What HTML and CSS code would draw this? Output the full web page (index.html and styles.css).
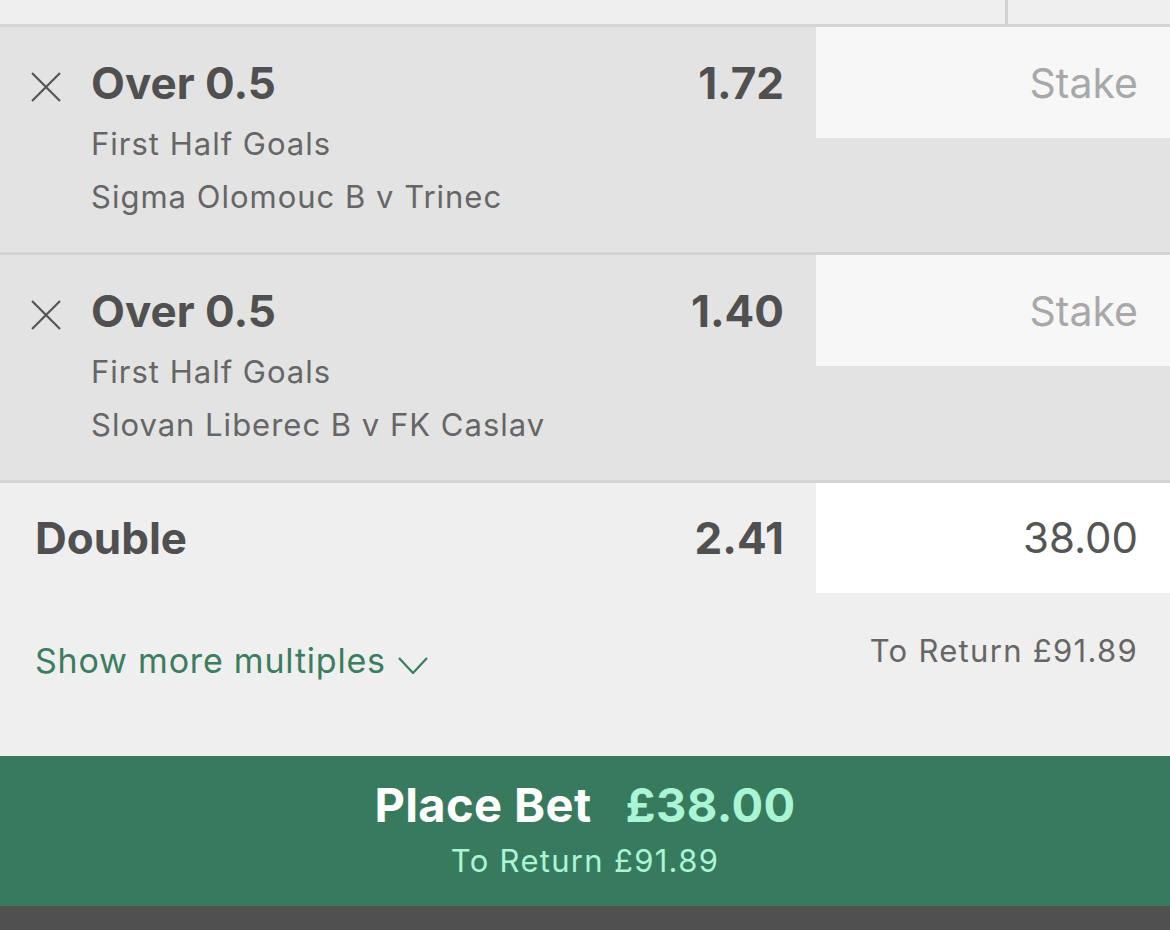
FILE: index.html
```html
<!DOCTYPE html>
<html lang="en">
<head>
	<meta charset="UTF-8">
	<title>Bet Slip</title>
	<link rel="stylesheet" href="styles.css">
</head>
<body>

	<div class="topbar">
		<div class="topbar-main"></div>
		<div class="topbar-side"></div>
	</div>

	<div class="slip">
		<div class="leg">
			<div class="leg-remove">
				<svg width="30" height="30" viewBox="0 0 30 30"><path d="M1 1 L29 29 M29 1 L1 29" stroke="#555" stroke-width="2.2" fill="none"/></svg>
			</div>
			<div class="leg-info">
				<div class="leg-head">
					<span class="leg-title">Over 0.5</span>
					<span class="leg-odds">1.72</span>
				</div>
				<div class="leg-market">First Half Goals</div>
				<div class="leg-event">Sigma Olomouc B v Trinec</div>
			</div>
			<div class="stake">Stake</div>
		</div>

		<div class="leg">
			<div class="leg-remove">
				<svg width="30" height="30" viewBox="0 0 30 30"><path d="M1 1 L29 29 M29 1 L1 29" stroke="#555" stroke-width="2.2" fill="none"/></svg>
			</div>
			<div class="leg-info">
				<div class="leg-head">
					<span class="leg-title">Over 0.5</span>
					<span class="leg-odds">1.40</span>
				</div>
				<div class="leg-market">First Half Goals</div>
				<div class="leg-event">Slovan Liberec B v FK Caslav</div>
			</div>
			<div class="stake">Stake</div>
		</div>

		<div class="multi">
			<div class="multi-row">
				<div class="multi-name">Double</div>
				<div class="multi-odds">2.41</div>
				<div class="stake stake-filled">38.00</div>
			</div>
			<div class="multi-foot">
				<div class="show-more">Show more multiples
					<svg width="30" height="17" viewBox="0 0 30 17"><path d="M1 1 L15 16 L29 1" stroke="#3b7d5e" stroke-width="2.2" fill="none"/></svg>
				</div>
				<div class="multi-return">To Return £91.89</div>
			</div>
		</div>
	</div>

	<div class="place-bet">
		<div class="place-main"><span class="place-label">Place Bet</span><span class="place-amount">£38.00</span></div>
		<div class="place-return">To Return £91.89</div>
	</div>

	<div class="bottombar"></div>

</body>
</html>
```

FILE: styles.css
```css
html,body{ margin: 0;padding: 0; }
body{ width: 1170px;height: 930px;overflow: hidden;background: #505050;
		font-family: "Inter", "Noto Sans", sans-serif;color: #505050; }

.topbar{ height: 24px;display: flex;background: #efefef; }
.topbar-main{ flex: 1; }
.topbar-side{ width: 162px;border-left: 3px solid #d3d3d3; }

.slip{ border-top: 3px solid #d4d4d4; }

.leg{ display: flex;align-items: flex-start;height: 225px;background: #e3e3e3;
		border-bottom: 3px solid #d4d4d4; }
.leg-remove{ width: 91px;flex: none;padding: 45px 0 0 31px;box-sizing: border-box; }
.leg-remove svg{ display: block; }
.leg-info{ flex: 1;padding: 28px 32px 0 0; }
.leg-head{ display: flex;justify-content: space-between;height: 56px;line-height: 56px; }
.leg-title,.leg-odds{ font-size: 44px;font-weight: 700; }
.leg-market,.leg-event{ font-size: 31px;letter-spacing: 1px;color: #666;height: 53px;line-height: 53px; }
.leg-market{ margin-top: 6px; }

.stake{ width: 354px;height: 111px;flex: none;box-sizing: border-box;padding: 28px 32px 0 0;
		background: #f7f7f7;text-align: right;font-size: 41px;line-height: 56px;color: #a8a8a8; }
.stake-filled{ background: #fff;color: #555;height: 110px;padding-top: 27px;font-size: 42px; }

.multi{ height: 273px;background: #efefef; }
.multi-row{ display: flex;align-items: flex-start; }
.multi-name{ flex: 1;padding: 27px 0 0 35px;font-size: 44px;font-weight: 700;line-height: 56px; }
.multi-odds{ padding: 27px 32px 0 0;font-size: 44px;font-weight: 700;line-height: 56px; }
.multi-foot{ display: flex;justify-content: space-between;align-items: flex-start;padding: 0 32px 0 35px; }
.show-more{ margin-top: 46px;font-size: 34px;letter-spacing: 0.8px;line-height: 44px;color: #3b7d5e;
		display: flex;align-items: center;gap: 12px; }
.show-more svg{ margin-top: 8px; }
.multi-return{ margin-top: 38px;font-size: 31px;letter-spacing: 1.3px;line-height: 40px;color: #666; }

.place-bet{ height: 150px;background: #387a5e;display: flex;flex-direction: column;align-items: center; }
.place-main{ margin-top: 21px;line-height: 56px;font-size: 47px;font-weight: 700;letter-spacing: 0.4px; }
.place-label{ color: #fff;margin-right: 34px; }
.place-amount{ color: #a9f5d6; }
.place-return{ font-size: 31px;letter-spacing: 1.3px;line-height: 40px;color: #a9f5d6;margin-top: 8px; }

.bottombar{ height: 24px;background: #505050; }
```
